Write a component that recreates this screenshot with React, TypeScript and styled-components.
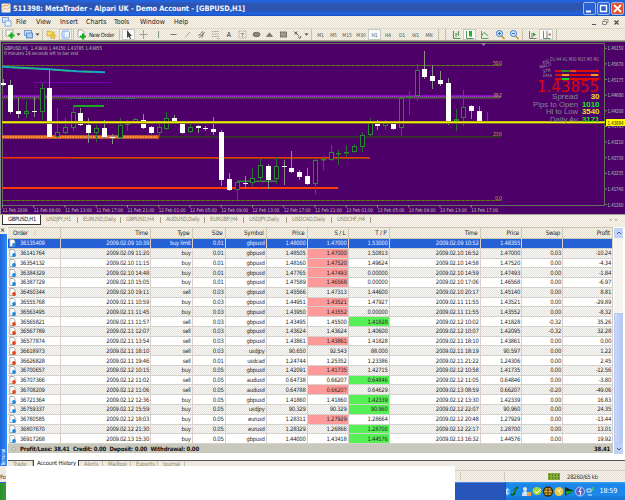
import React from "react";
import styled, { createGlobalStyle, css } from "styled-components";

const Global = createGlobalStyle`
  * { box-sizing: border-box; }
  body { margin: 0; overflow: hidden; font-family: "DejaVu Sans Condensed", "DejaVu Sans", sans-serif; font-stretch: condensed; }
`;

const dither = (a: string, b: string) => css`
  background: repeating-conic-gradient(${a} 0% 25%, ${b} 0% 50%) 0 0 / 2px 2px;
`;

const Window = styled.div`
  width: 625px;
  height: 500px;
  display: flex;
  flex-direction: column;
  overflow: hidden;
  background: #ece8dc;
`;

const TitleBar = styled.div`
  height: 16px;
  flex: none;
  display: flex;
  align-items: center;
  padding: 0 1px 0 1px;
  background: linear-gradient(#1b66e6 0, #2a5fd0 2px, #2c55b2 4px, #2c55b4 10px, #2162d8 13px, #1b5fe0 15px, #1c48a8 16px);
`;

const Title = styled.div`
  flex: 1;
  margin-left: 2px;
  color: #eef3ff;
  font: bold 7.4px/15px "DejaVu Sans Condensed", "DejaVu Sans", sans-serif;
  font-stretch: condensed;
  white-space: nowrap;
  letter-spacing: -0.08px;
`;

const WinButton = styled.div<{ $close?: boolean }>`
  width: 13px;
  height: 13px;
  margin-left: 1px;
  border: 1px solid #9db8ec;
  border-radius: 2px;
  background: ${(p) => (p.$close ? "#e4512a" : "#2b62d0")};
  svg { display: block; }
`;

const MenuBar = styled.div`
  height: 12px;
  flex: none;
  display: flex;
  align-items: center;
  padding-left: 2px;
  font-size: 7px;
  line-height: 11px;
  color: #222;
  ${dither("#f9f4ea", "#e9e1d4")}
`;

const MenuItem = styled.span<{ $w: number }>`
  width: ${(p) => p.$w}px;
  flex: none;
`;

const MdiButtons = styled.div`
  margin-left: auto;
  margin-right: 2px;
  display: flex;
`;

const ToolBar = styled.div`
  height: 13px;
  flex: none;
  display: flex;
  align-items: center;
  border-top: 1px solid #dcd6c4;
  border-bottom: 1px solid #a7a291;
  ${dither("#f6f2e6", "#e6dfd2")}
`;

const Slot = styled.div<{ $w: number; $on?: boolean }>`
  width: ${(p) => p.$w}px;
  height: 11px;
  flex: none;
  display: flex;
  align-items: center;
  justify-content: center;
  font-size: 5px;
  letter-spacing: -0.1px;
  color: #55554d;
  ${(p) => p.$on && css`background: #fbfaf6; border: 1px solid #c6ccca;`}
  svg { flex: none; display: block; }
`;

const Grip = styled.div<{ $w: number }>`
  width: ${(p) => p.$w}px;
  height: 11px;
  flex: none;
  display: flex;
  justify-content: center;
  &::after { content: ""; width: 1px; background: #c4c2ae; }
`;

const ToolLabel = styled.div`
  width: 28px;
  flex: none;
  font-size: 5.8px;
  letter-spacing: -0.3px;
  white-space: nowrap;
  color: #222;
  padding-left: 1px;
`;

const Chart = styled.svg`
  display: block;
  flex: none;
`;

const ChartTabs = styled.div`
  height: 13px;
  flex: none;
  display: flex;
  align-items: flex-start;
  border-top: 1px solid #a5a596;
  padding-left: 2px;
  font-size: 5.8px;
  line-height: 9px;
  ${dither("#f8f4ea", "#ece4da")}
`;

const ChartTab = styled.div<{ $w: number; $active?: boolean }>`
  width: ${(p) => p.$w}px;
  flex: none;
  height: ${(p) => (p.$active ? 10 : 9)}px;
  padding-left: 5px;
  white-space: nowrap;
  letter-spacing: -0.32px;
  color: ${(p) => (p.$active ? "#111" : "#8e8e6e")};
  ${(p) => p.$active
    ? css`background: #fff; border-right: 1px solid #333; border-bottom: 1px solid #333; border-left: 1px solid #333;`
    : css`background: linear-gradient(#a4a48c, #a4a48c) right 2px / 1px 6px no-repeat;`}
`;

const TabArrows = styled.div`
  margin-left: auto;
  width: 16px;
  color: #aaa894;
  display: flex;
  gap: 4px;
  font-size: 5px;
`;

const Terminal = styled.div`
  height: 239px;
  flex: none;
  display: flex;
`;

const SideBar = styled.div`
  width: 7px;
  flex: none;
  display: flex;
  flex-direction: column;
  justify-content: space-between;
  background: linear-gradient(90deg, #1d66dc, #2f8af6);
`;

const SideClose = styled.div`
  height: 7px;
  background: #f2ede2;
  font: bold 6px/6px "DejaVu Sans", sans-serif;
  color: #333;
`;

const SideLabel = styled.div`
  writing-mode: vertical-rl;
  transform: rotate(180deg);
  color: #fff;
  font-size: 5.3px;
  line-height: 7px;
  letter-spacing: -0.4px;
`;

const Main = styled.div`
  flex: 1;
  display: flex;
  flex-direction: column;
  padding-left: 1px;
  background: #fff;
`;

const TableArea = styled.div`
  height: 227px;
  flex: none;
  display: flex;
`;

const Table = styled.div`
  width: 605px;
  flex: none;
`;

const columns = "52.5px 90.5px 41.5px 33px 41px 41px 41px 41px 91px 41.5px 41px 50px";

const HeadRow = styled.div`
  display: grid;
  grid-template-columns: ${columns};
  height: 12px;
  border-bottom: 1px solid #cbc5b2;
  border-top: 1px solid #c9c5b5;
  ${dither("#f7f2e6", "#e6e0d2")}
`;

const HeadCell = styled.div<{ $left?: boolean }>`
  font-size: 6.2px;
  line-height: 10px;
  letter-spacing: -0.2px;
  text-align: ${(p) => (p.$left ? "left" : "right")};
  padding: 0 2px 0 5px;
  color: #222;
  border-right: 1px solid #cfc9b8;
`;

const SortMark = styled.span`
  margin-left: 6px;
  color: #a8a490;
`;

const Row = styled.div<{ $alt?: boolean; $selected?: boolean }>`
  display: grid;
  grid-template-columns: ${columns};
  height: 9.77px;
  border-bottom: 1px solid #d4d2cd;
  color: ${(p) => (p.$selected ? "#e4ecff" : "#2a2a2a")};
  ${(p) => p.$selected ? dither("#2a5fd0", "#1f62dc") : p.$alt ? dither("#fafaf8", "#e2e1dd") : css`background: #fff;`}
`;

const Cell = styled.div<{ $tone?: "red" | "green" }>`
  display: flex;
  align-items: center;
  justify-content: flex-end;
  white-space: nowrap;
  font-size: 5.95px;
  line-height: 8px;
  letter-spacing: -0.31px;
  padding-right: 1px;
  border-right: 1px solid #dccfc8;
  background: ${(p) => (p.$tone === "red" ? "#ff9a9a" : p.$tone === "green" ? "#55f055" : "transparent")};
`;

const OrderCell = styled(Cell)`
  justify-content: flex-start;
  padding-left: 1px;
  gap: 4px;
`;

const Summary = styled.div`
  height: 9.3px;
  display: flex;
  justify-content: space-between;
  align-items: center;
  background: #c9c8bc;
  color: #111;
  font-size: 5.95px;
  line-height: 9px;
  font-weight: bold;
  letter-spacing: -0.2px;
  padding: 0 3px 0 4px;
  white-space: pre;
`;

const SummaryText = styled.span`
  flex: 1;
  padding-left: 4px;
`;

const ScrollBar = styled.div`
  width: 9px;
  margin: 1px 0 0 1px;
  display: flex;
  flex-direction: column;
  background: #f5f4ee;
`;

const ScrollButton = styled.div`
  height: 10px;
  flex: none;
  display: flex;
  align-items: center;
  justify-content: center;
  background: #c0d2f8;
  border-radius: 1px;
`;

const Track = styled.div`
  flex: 1;
  padding-top: 75px;
`;

const Thumb = styled.div`
  height: 100%;
  background: linear-gradient(90deg, #c8d8fc, #b4c8f4);
  border: 1px solid #b8caf0;
`;

const BottomTabs = styled.div`
  flex: 1;
  display: flex;
  margin-top: 6px;
  border-top: 1px solid #555;
  font-size: 5.8px;
  line-height: 8px;
  ${dither("#f6f1e8", "#e9e1d8")}
`;

const BottomTab = styled.div<{ $w: number; $active?: boolean }>`
  width: ${(p) => p.$w}px;
  flex: none;
  white-space: nowrap;
  padding-left: 5px;
  letter-spacing: -0.15px;
  line-height: 7px;
  color: ${(p) => (p.$active ? "#111" : "#8c8c6c")};
  border-right: 1px solid ${(p) => (p.$active ? "#444" : "#c4c2ae")};
  ${(p) => p.$active && css`background: #fff; border-left: 1px solid #444; margin-top: -1px; padding-left: 3px;`}
`;

const Footer = styled.div`
  flex: 1;
  display: flex;
`;

const FooterLeft = styled.div`
  width: 6px;
  flex: none;
  display: flex;
  flex-direction: column;
`;

const StatusStub = styled.div`
  height: 16px;
  overflow: hidden;
  background: #f0ebe0;
  color: #333;
  font-size: 6px;
  padding-top: 7px;
  line-height: 8px;
  letter-spacing: -0.5px;
`;

const StartStub = styled.div`
  flex: 1;
  border-top: 1px solid #2d62d4;
  background: linear-gradient(90deg, #2b8f2b, #3a9a3a);
`;

const Blank = styled.div`
  width: 449px;
  flex: none;
  background: #fff;
`;

const FooterRight = styled.div`
  flex: 1;
  display: flex;
  flex-direction: column;
`;

const FooterGap = styled.div`
  height: 5px;
  border-bottom: 1px solid #d0cdbf;
  ${dither("#f6f1e8", "#e9e1d8")}
`;

const StatusBar = styled.div`
  height: 11px;
  display: flex;
  align-items: center;
  font-size: 6px;
  letter-spacing: -0.3px;
  color: #333;
  ${dither("#f6f1e8", "#e9e1d8")}
`;

const StatusField = styled.div<{ $w: number }>`
  width: ${(p) => p.$w}px;
  height: 9px;
  border-right: 1px solid #cfccba;
`;

const Traffic = styled.svg`
  margin: 0 7px 0 43px;
`;

const TaskBar = styled.div`
  flex: 1;
  display: flex;
`;

const TaskArea = styled.div`
  width: 50px;
  border-top: 1px solid #4c86e8;
  ${dither("#2a52b0", "#2458c2")}
`;

const Tray = styled.div`
  flex: 1;
  display: flex;
  align-items: center;
  border-left: 1px solid #1a50b0;
  background: linear-gradient(#3aa4f4 0, #1c86ea 2px, #1a88e8 13px, #1672d0);
  color: #fff;
  font: 7px/17px "DejaVu Sans Condensed", "DejaVu Sans", sans-serif;
  font-stretch: condensed;
`;

const Clock = styled.span`
  margin-left: 5.5px;
  letter-spacing: -0.1px;
`;

type Candle = [number, number, number, number, number, 0 | 1];

/* x, high, body top, body bottom, low, rising */
const candles: Candle[] = [
  [3, 79, 83, 85, 86, 0], [10.5, 80, 85, 112, 114, 0], [18.5, 98, 111, 114, 118, 0], [26.5, 101, 111, 114, 118, 1],
  [34, 97, 111, 112, 117, 0], [42, 83, 88, 112, 120, 1], [49.5, 69, 88, 137, 138, 0], [57.5, 108, 132, 137, 138, 1],
  [65, 118, 127, 133, 134, 1], [73, 105, 112, 128, 131, 1], [80.5, 108, 113, 125, 126, 0], [88.5, 118, 125, 133, 143, 0],
  [96.5, 125, 128, 133, 142, 1], [104.5, 120, 128, 137, 138, 0], [112, 134, 137, 138, 144, 0], [120, 118, 125, 138, 139, 1],
  [127.5, 120, 123, 125, 131, 1], [135, 118, 119, 123, 124, 1], [143.5, 114, 120, 128, 129, 0], [151, 126, 127, 133, 134, 0],
  [159, 122, 127, 133, 137, 1], [166.5, 112, 118, 129, 130, 1], [174.5, 115, 118, 123, 124, 0], [182.5, 121, 122, 133, 134, 0],
  [190, 123, 127, 132, 133, 1], [198, 125, 126, 128, 133, 0], [205.5, 126, 128, 129, 131, 0], [213.5, 117, 129, 132, 135, 0],
  [221.5, 130, 132, 180, 186, 0], [229.5, 173, 179, 190, 191, 0], [237, 181, 182, 190, 200, 1], [245, 176, 183, 184, 189, 0],
  [252.5, 168, 178, 183, 186, 1], [260.5, 159, 165, 178, 182, 1], [268.5, 164, 166, 180, 189, 0], [276, 157, 166, 179, 184, 1],
  [284, 160, 166, 167, 185, 0], [291.5, 151, 168, 172, 173, 0], [299.5, 170, 172, 177, 180, 0], [307.5, 168, 176, 184, 185, 0],
  [315, 158, 160, 184, 194, 1], [323, 157, 159, 160, 170, 1], [331, 145, 152, 160, 161, 1], [338.5, 150, 153, 154, 165, 1],
  [346.5, 145, 152, 153, 157, 1], [354, 144, 146, 152, 153, 1], [362, 132, 135, 147, 152, 1], [370, 118, 121, 135, 136, 1],
  [377.5, 120, 122, 126, 130, 0], [385.5, 120, 123, 126, 130, 1], [393.5, 121, 123, 129, 130, 0], [401, 96, 98, 128, 136, 1],
  [409, 91, 96, 98, 115, 1], [417, 64, 70, 96, 101, 1], [424.5, 51, 69, 77, 79, 0], [432.5, 65, 76, 81, 89, 0],
  [440.5, 71, 80, 84, 86, 0], [448, 78, 83, 122, 125, 0], [456, 109, 119, 121, 131, 1], [463.5, 90, 107, 118, 126, 1],
  [471.5, 105, 106, 111, 119, 0], [479.5, 106, 111, 122, 124, 0], [487, 112, 121, 123, 124, 1],
];

const priceScale = ["1.46150", "1.45670", "1.45175", "1.44680", "1.44200", "1.43705", "1.43210", "1.42730", "1.42235", "1.41740", "1.41260"];
const timeScale = [
  "11 Feb 2009", "11 Feb 09:00", "11 Feb 13:00", "11 Feb 17:00", "11 Feb 21:00", "12 Feb 01:00", "12 Feb 05:00", "12 Feb 09:00",
  "12 Feb 13:00", "12 Feb 17:00", "12 Feb 21:00", "13 Feb 01:00", "13 Feb 05:00", "13 Feb 09:00", "13 Feb 13:00", "13 Feb 17:00",
];
const stats: [string, string, string, number, number][] = [
  ["Spread", "30", "#f0e020", 552, 26], ["Pips to Open", "1010", "#10e820", 533, 45],
  ["Hi to Low", "3540", "#e0e020", 546, 32], ["Daily Av", "3171", "#10e820", 550, 28],
];

function PriceChart() {
  const scale = "#bcc6ae";
  return (
    <Chart width="625" height="173" viewBox="0 41 625 173" fontFamily="'DejaVu Sans Condensed', 'DejaVu Sans', sans-serif">
      <rect x="0" y="41" width="625" height="173" fill="#4c0068" />
      <rect x="0" y="41" width="625" height="1" fill="#6f7565" />
      <rect x="0" y="41" width="1" height="173" fill="#8f8a9a" />
      <path d="M2.5 43.5H604.5V205.5H2.5Z" fill="none" stroke="#66705f" />
      <g fill="#566018">
        <rect x="2" y="65" width="500" height="1" /><rect x="2" y="200" width="500" height="1" />
      </g>
      <path d="M2 65.5H501M2 200.5H501" stroke="#6c7a20" strokeDasharray="2 3" />
      <rect x="2" y="95" width="499" height="2" fill="#8a08c8" />
      <path d="M2 96.5H497" stroke="#a53cd6" strokeDasharray="1 1" />
      <rect x="2" y="97" width="499" height="1.5" fill="#5a5a48" />
      <path d="M2 99.5H70" stroke="#3c3c34" strokeDasharray="2 1" />
      <path d="M70 98.5H135" stroke="#287a78" strokeDasharray="2 1" />
      <rect x="34" y="82" width="77" height="1" fill="#7800b4" />
      <path d="M2 66.7L49 69.2L77 71.2L105 72.2" stroke="#18a8c0" strokeWidth="2" fill="none" />
      <path d="M10 67.5L40 68.7M53 70L70 71M82 71.7L92 72" stroke="#20c070" strokeWidth="1" fill="none" />
      <rect x="73" y="105" width="31" height="2" fill="#18a820" />
      <rect x="158" y="136" width="343" height="2" fill="#38302c" />
      <rect x="2" y="135" width="157" height="4" fill="#b85434" />
      <path d="M2 137H158" stroke="#ff8c30" strokeWidth="2" strokeDasharray="2 .6" />
      <rect x="2" y="157" width="368" height="1.6" fill="#f03408" />
      <path d="M70 158.5H370" stroke="#985018" strokeDasharray="1 1" />
      <rect x="2" y="187" width="336" height="2" fill="#ff3c08" />
      <rect x="237" y="180.6" width="39" height="1.2" fill="#28a828" />
      {candles.map(([x, high, top, bottom, low, rising]) => {
        const cx = Math.floor(x);
        return rising ? (
          <g key={x}>
            <path d={`M${cx + 0.5} ${high}V${top}M${cx + 0.5} ${bottom}V${low}`} stroke="#2c6c34" />
            <rect x={cx - 1.5} y={top + 0.5} width="4" height={Math.max(bottom - top - 1, 0.5)} fill="#420058" stroke="#258a30" />
          </g>
        ) : (
          <g key={x}>
            <path d={`M${cx + 0.5} ${high}V${low}`} stroke="#8a9088" />
            <rect x={cx - 2} y={top} width="5" height={bottom - top} fill="#fff" />
          </g>
        );
      })}
      <rect x="2" y="121" width="603" height="3" fill="#70602c" />
      <rect x="2" y="121.4" width="603" height="1.5" fill="#ffff00" />
      <path d="M481 43L486 43L483.500 46Z" fill="#8b9488" />
      <text x="4" y="49.500" fontSize="5.2" fill={scale} textLength="98" lengthAdjust="spacingAndGlyphs">GBPUSD,H1&#160;&#160;1.43930 1.44150 1.43785 1.43855</text>
      <text x="4" y="54.500" fontSize="5" fill={scale} textLength="74" lengthAdjust="spacingAndGlyphs">0 minutes 19 seconds left to bar end</text>
      <g fontSize="5.4" fill="#a8a840">
        <text x="493" y="65" textLength="9">50.0</text><text x="493" y="97" textLength="9">38.2</text>
        <text x="493" y="136" textLength="9">23.6</text><text x="495" y="199.500" textLength="7">0.0</text>
      </g>
      {priceScale.map((p, i) => (
        <g key={p}>
          <path d={`M605 ${48.3 + i * 15.63}h2`} stroke="#7c8472" />
          <text x="607.500" y={50.3 + i * 15.63} fontSize="5.4" fill={scale} textLength="16" lengthAdjust="spacingAndGlyphs">{p}</text>
        </g>
      ))}
      <rect x="606" y="119" width="19" height="7" fill="#ffff00" />
      <text x="607.500" y="124.500" fontSize="5.4" fill="#222" textLength="16" lengthAdjust="spacingAndGlyphs">1.43884</text>
      {timeScale.map((t, i) => (
        <g key={t}>
          <path d={`M${2.5 + i * 31.25} 205v2.500`} stroke="#8c947f" />
          <text x={2.5 + i * 31.25} y="212" fontSize="5.2" fill={scale} textLength={i ? 27 : 25} lengthAdjust="spacingAndGlyphs">{t}</text>
        </g>
      ))}
      <text x="550" y="60.500" fontSize="5.2" fill="#9a9aa0" textLength="49" lengthAdjust="spacingAndGlyphs">D1 H4 H1 M30 M15 M5 M1</text>
      <g fontSize="4.6" fill="#9b98b0">
        <text x="543" y="64.500" transform="rotate(-18 543 64.500)">RSI</text>
        <text x="540" y="69" transform="rotate(-18 540 69)">MACD</text>
        <text x="543" y="73" transform="rotate(-10 543 73)">STR</text>
        <text x="543" y="77">EMA</text>
      </g>
      <g fill="#d80c0c">
        <rect x="555" y="70" width="44" height="2" /><rect x="555" y="74" width="44" height="2" /><rect x="555" y="78" width="44" height="2" />
      </g>
      <rect x="562" y="70" width="7" height="2" fill="#2c8c30" /><rect x="570" y="70" width="6" height="2" fill="#e84c20" />
      <rect x="562" y="74" width="7" height="2" fill="#f0a020" /><rect x="591" y="74" width="7" height="2" fill="#f0a020" />
      <rect x="562" y="78" width="7" height="2" fill="#18d820" />
      <text x="537" y="92" fontSize="15.500" fill="#d8080c" fontFamily="'DejaVu Sans', sans-serif" textLength="62" lengthAdjust="spacingAndGlyphs">1.43855</text>
      {stats.map(([label, value, color, x, w], i) => (
        <g key={label} fontSize="7.500" fontFamily="'Liberation Sans', sans-serif">
          <text x={x} y={99.4 + i * 7.4} fill="#8a8590" textLength={w} lengthAdjust="spacingAndGlyphs">{label}</text>
          <text x="599.500" y={99.4 + i * 7.4} fill={color} fontWeight="bold" textAnchor="end" textLength={value.length * 4.4} lengthAdjust="spacingAndGlyphs">{value}</text>
        </g>
      ))}
    </Chart>
  );
}

const glyphs: Record<string, React.ReactNode> = {
  newChart: <><rect x="1" y="1" width="7" height="6" fill="#f5f8f5" stroke="#8a9a8a" strokeWidth=".7" /><path d="M6.500 3.500v6M3.500 6.500h6" stroke="#12b01c" strokeWidth="2.200" /></>,
  caret: <path d="M3.500 4.500h4l-2 2z" fill="#333" />,
  profiles: <><rect x="1.500" y="1.500" width="7" height="5" fill="#cfe2fa" stroke="#5a8ad0" strokeWidth=".8" /><rect x="3.500" y="4" width="6" height="5" fill="#a9cbf5" stroke="#4a7cc8" strokeWidth=".8" /></>,
  navigator: <><path d="M1 2h3l1 1h3v4H1z" fill="#f7dc60" stroke="#b89828" strokeWidth=".6" /><path d="M7 4l1 2 2 .3-1.500 1.500.4 2.200-2-1-2 1 .4-2.200L4 6.300l2-.3z" fill="#f0c828" stroke="#b89828" strokeWidth=".4" /></>,
  terminal: <><rect x="2" y="2" width="7.500" height="7" rx="1" fill="#eaf3ff" stroke="#5a94e0" strokeWidth=".8" /><path d="M4 2.500v6" stroke="#8ab4ea" strokeWidth=".8" /></>,
  newOrder: <><path d="M2 1h4l2 2v5H2z" fill="#fff" stroke="#888" strokeWidth=".7" /><path d="M7 4.500v6M4 7.500h6" stroke="#12b01c" strokeWidth="2.200" /></>,
  cursor: <path d="M4 1v8l1.800-1.600L7 10l1-.5L7 7h2z" fill="#444" />,
  cross: <path d="M5.500 1v9M1.500 5.500h8" stroke="#999" strokeWidth=".9" />,
  vline: <path d="M5.500 2v7" stroke="#7f9a7f" />,
  hline: <path d="M2.500 5.500h6" stroke="#777" />,
  trend: <path d="M3 8.500l5-5.500" stroke="#888" strokeWidth=".8" />,
  channel: <path d="M2 7l5-5M3 9l6-6M3 6h5M6 9l1-6" stroke="#777" strokeWidth=".8" />,
  fibo: <path d="M2 2.500h7M2 5h7M2 7.500h7M7 9.500h3" stroke="#8f8772" strokeWidth=".8" strokeDasharray="1 .6" />,
  text: <text x="3.500" y="8" fontSize="6.500" fontFamily="Liberation Sans, sans-serif" fontWeight="bold" fill="#666">A</text>,
  label: <><rect x="2" y="2" width="7" height="7" fill="none" stroke="#888" strokeWidth=".7" strokeDasharray="1 .7" /><text x="3.700" y="8" fontSize="5.500" fontFamily="Liberation Sans, sans-serif" fill="#555">T</text></>,
  ellipse: <ellipse cx="5.500" cy="5.500" rx="3.500" ry="2.200" fill="#858578" stroke="#66665c" strokeWidth=".8" />,
  triangle: <path d="M2.500 7.500L5.500 3.800l3 3.700z" fill="#77776c" stroke="#66665c" strokeWidth=".6" />,
  rect: <rect x="2.500" y="3" width="6" height="5" fill="#9a9a8e" stroke="#66665c" strokeWidth=".8" />,
  arrows: <path d="M2 2.500l3 3M5 2.500l-2 3M6 8l2 1.500L9 7M3 3l4 4" stroke="#555" strokeWidth=".9" fill="none" />,
  bars: <path d="M2.500 2v7.500h7M5 4v4M5 5h1.500M7.500 2v5" stroke="#3f8a48" strokeWidth=".9" fill="none" />,
  candle: <><path d="M2.500 2v7.500h7" stroke="#3f8a48" strokeWidth=".9" fill="none" /><rect x="5" y="2" width="3" height="5.500" fill="#1fb32c" /></>,
  line: <path d="M2.500 2v7.500h7M3 6.500q2-5 3.500-1.500L9 6.500" stroke="#4a9a50" strokeWidth=".9" fill="none" />,
  zoomIn: <><path d="M6.500 7l3 3" stroke="#c99c28" strokeWidth="1.600" /><circle cx="4.500" cy="4.500" r="3" fill="#cfe6ff" stroke="#3a7ad0" /><path d="M3 4.500h3M4.500 3v3" stroke="#2460c0" strokeWidth=".9" /></>,
  zoomOut: <><path d="M6.500 7l3 3" stroke="#c99c28" strokeWidth="1.600" /><circle cx="4.500" cy="4.500" r="3" fill="#cfe6ff" stroke="#3a7ad0" /><path d="M3 4.500h3" stroke="#2460c0" strokeWidth=".9" /></>,
  scroll: <><path d="M2.500 2v7.500h7M5 4v5" stroke="#667566" strokeWidth=".9" fill="none" /><path d="M6 3.500l3 2-3 2z" fill="#1fb32c" /></>,
  shift: <><path d="M2.500 2v7.500h7M6 2v7" stroke="#667566" strokeWidth=".9" fill="none" /><path d="M9.500 4l-2.500 1.500 2.500 1.500z" fill="#c05030" /></>,
};

type Tool = { w: number; icon?: string; text?: string; label?: string; on?: boolean };
const tools: Tool[] = [
  { w: 4 }, { w: 12, icon: "newChart" }, { w: 5, icon: "caret" }, { w: 14, icon: "profiles" }, { w: 5, icon: "caret" }, { w: 4 },
  { w: 15, icon: "navigator" }, { w: 13, icon: "terminal", on: true }, { w: 3 }, { w: 13, icon: "newOrder" }, { w: 28, label: "New Order" },
  { w: 6 }, { w: 13, icon: "cursor", on: true }, { w: 16, icon: "cross" }, { w: 15, icon: "vline" }, { w: 15, icon: "hline" },
  { w: 13, icon: "trend" }, { w: 14, icon: "channel" }, { w: 14, icon: "fibo" }, { w: 13, icon: "text" }, { w: 14, icon: "label" },
  { w: 14, icon: "ellipse" }, { w: 13, icon: "triangle" }, { w: 14, icon: "rect" }, { w: 14, icon: "arrows" }, { w: 5, icon: "caret" },
  { w: 5 }, { w: 13, text: "M1" }, { w: 13, text: "M5" }, { w: 14, text: "M15" }, { w: 14, text: "M30" }, { w: 13, text: "H1", on: true },
  { w: 14, text: "H4" }, { w: 14, text: "D1" }, { w: 13, text: "W1" }, { w: 14, text: "MN" }, { w: 5 }, { w: 9 },
  { w: 13, icon: "bars" }, { w: 13, icon: "candle", on: true }, { w: 16, icon: "line" }, { w: 17, icon: "zoomIn" }, { w: 11, icon: "zoomOut" },
  { w: 5 }, { w: 14, icon: "scroll" }, { w: 14, icon: "shift", on: true }, { w: 6 },
];

const menu: [string, number][] = [["File", 20], ["View", 24], ["Insert", 26], ["Charts", 28], ["Tools", 26], ["Window", 34], ["Help", 20]];

const chartTabs: [string, number][] = [
  ["GBPUSD,H1", 39], ["USDJPY,H1", 37], ["EURUSD,Daily", 43], ["GBPUSD,H4", 40], ["AUDUSD,Daily", 44], ["EURGBP,H4", 39],
  ["USDJPY,Daily", 43], ["USDCAD,Daily", 45], ["USDCHF,H4", 39],
];

const headings = ["Order", "Time", "Type", "Size", "Symbol", "Price", "S / L", "T / P", "Time", "Price", "Swap", "Profit"];

/* A leading "!" marks a stop that was hit, a leading "+" a target that was hit. */
const orders = `36135409|2009.02.09 10:39|buy limit|0.01|gbpusd|1.48000|1.47000|1.53000|2009.02.09 10:52|1.48355||
36141764|2009.02.09 11:20|buy|0.01|gbpusd|1.48505|!1.47000|1.50813|2009.02.10 16:52|1.47000|0.03|-10.24
36354132|2009.02.10 11:15|buy|0.01|gbpusd|1.48160|!1.47520|1.49624|2009.02.10 14:58|1.47520|0.00|-4.34
36384329|2009.02.10 14:48|buy|0.01|gbpusd|1.47765|!1.47493|0.00000|2009.02.10 14:59|1.47493|0.00|-1.84
36387729|2009.02.10 15:05|buy|0.01|gbpusd|1.47589|!1.46568|0.00000|2009.02.10 17:06|1.46568|0.00|-6.97
36450344|2009.02.10 19:11|sell|0.03|gbpusd|1.45566|1.47313|1.44600|2009.02.10 20:17|1.45140|0.00|8.81
36555768|2009.02.11 10:59|buy|0.03|gbpusd|1.44951|!1.43521|1.47927|2009.02.11 11:55|1.43521|0.00|-29.89
36563495|2009.02.11 11:45|buy|0.03|gbpusd|1.43950|!1.43552|0.00000|2009.02.11 11:55|1.43552|0.00|-8.32
36565821|2009.02.11 11:57|sell|0.03|gbpusd|1.43495|1.45500|+1.41828|2009.02.12 10:02|1.41828|-0.32|35.26
36567789|2009.02.11 12:07|sell|0.03|gbpusd|1.43624|1.43624|1.40600|2009.02.12 10:07|1.42095|-0.32|32.28
36577874|2009.02.11 13:54|sell|0.03|gbpusd|1.43861|!1.43861|1.41828|2009.02.11 18:10|1.43861|0.00|0.00
36618973|2009.02.11 18:10|sell|0.03|usdjpy|90.650|92.543|88.000|2009.02.11 18:19|90.597|0.00|1.22
36626828|2009.02.11 19:46|sell|0.01|usdcad|1.24744|1.25352|1.23386|2009.02.11 21:22|1.24306|0.00|2.45
36700657|2009.02.12 10:15|buy|0.05|gbpusd|1.42091|!1.41735|1.42715|2009.02.12 10:58|1.41735|0.00|-12.56
36707366|2009.02.12 11:02|sell|0.05|audusd|0.64738|0.66207|+0.64846|2009.02.12 11:05|0.64846|0.00|-3.80
36708209|2009.02.12 11:06|sell|0.05|audusd|0.64788|!0.66207|0.64629|2009.02.13 08:59|0.66207|-0.20|-49.06
36721364|2009.02.12 12:36|buy|0.05|gbpusd|1.41860|1.41860|+1.42339|2009.02.12 13:30|1.42339|0.00|16.83
36759337|2009.02.12 15:59|buy|0.05|usdjpy|90.329|90.329|+90.960|2009.02.12 22:07|90.960|0.00|24.35
36780585|2009.02.12 18:03|buy|0.05|eurusd|1.28311|!1.27929|1.28664|2009.02.12 20:48|1.27929|0.00|-13.44
36807670|2009.02.12 21:30|buy|0.05|eurusd|1.28329|1.26866|+1.28700|2009.02.12 22:17|1.28700|0.00|13.01
36917268|2009.02.13 15:30|buy|0.05|gbpusd|1.44000|1.43418|+1.44576|2009.02.13 16:32|1.44576|0.00|19.92`
  .split("\n")
  .map((line) => line.split("|"));

const toneOf = (value: string) => (value[0] === "!" ? "red" : value[0] === "+" ? "green" : undefined);

function OrderIcon({ sell }: { sell: boolean }) {
  return (
    <svg width="7" height="8" viewBox="0 0 7 8">
      <path d="M.8.5h3.700l1.500 1.500v5.500H.8z" fill="#fff" stroke="#8c8c8c" strokeWidth=".7" />
      <circle cx="5" cy="6" r="1.900" fill={sell ? "#e04818" : "#2088e0"} />
    </svg>
  );
}

export default function App() {
  return (
    <Window>
      <Global />
      <TitleBar>
        <svg width="10" height="10" viewBox="0 0 10 10">
          <rect x=".5" y=".5" width="9" height="9" rx="1" fill="#f5efe0" />
          <path d="M1 4l3-2 2 1 3-2" stroke="#e0a030" fill="none" /><path d="M1 8l3-3 2 1.500L9 4" stroke="#c8b8a0" fill="none" />
        </svg>
        <Title>511398: MetaTrader - Alpari UK - Demo Account - [GBPUSD,H1]</Title>
        <WinButton><svg width="11" height="11"><path d="M2 8.500h5" stroke="#fff" strokeWidth="2" /></svg></WinButton>
        <WinButton><svg width="11" height="11"><path d="M2 2.500h7M2.500 2v6.500h6V2" stroke="#fff" strokeWidth="1.400" fill="none" /></svg></WinButton>
        <WinButton $close><svg width="11" height="11"><path d="M2 2l7 7M9 2l-7 7" stroke="#fff" strokeWidth="1.800" /></svg></WinButton>
      </TitleBar>
      <MenuBar>
        <MenuItem $w={14}>
          <svg width="10" height="10" viewBox="0 0 10 10" display="block">
            <rect x=".5" y=".5" width="6" height="5" fill="#d6e8fc" stroke="#6a9ad8" strokeWidth=".8" />
            <rect x="3" y="4" width="6" height="5" fill="#eef6ff" stroke="#6a9ad8" strokeWidth=".8" />
          </svg>
        </MenuItem>
        {menu.map(([name, w]) => <MenuItem key={name} $w={w}>{name}</MenuItem>)}
        <MdiButtons>
          <svg width="34" height="10">
            <path d="M3 7.500h4" stroke="#555" /><path d="M13.500 4.500h4v3h-4zM15 4V2.500h4v3h-1" fill="none" stroke="#777" strokeWidth=".8" />
            <path d="M25.500 3.500l4 4M29.500 3.500l-4 4" stroke="#444" strokeWidth="1.100" />
          </svg>
        </MdiButtons>
      </MenuBar>
      <ToolBar>
        {tools.map((t, i) =>
          t.label ? <ToolLabel key={i}>{t.label}</ToolLabel>
            : t.icon ? <Slot key={i} $w={t.w} $on={t.on}><svg width="11" height="11" viewBox="0 0 11 11">{glyphs[t.icon]}</svg></Slot>
            : t.text ? <Slot key={i} $w={t.w} $on={t.on}>{t.text}</Slot>
            : <Grip key={i} $w={t.w} />
        )}
      </ToolBar>
      <PriceChart />
      <ChartTabs>
        {chartTabs.map(([name, w], i) => <ChartTab key={name} $w={w} $active={i === 0}>{name}</ChartTab>)}
        <TabArrows><span>◂</span><span>▸</span></TabArrows>
      </ChartTabs>
      <Terminal>
        <SideBar>
          <SideClose>×</SideClose>
          <SideLabel>Terminal</SideLabel>
        </SideBar>
        <Main>
          <TableArea>
            <Table>
              <HeadRow>
                {headings.map((h, i) => <HeadCell key={i} $left={i === 0}>{h}{i === 0 && <SortMark>/</SortMark>}</HeadCell>)}
              </HeadRow>
              {orders.map((o, r) => (
                <Row key={o[0]} $alt={r % 2 === 1} $selected={r === 0}>
                  {o.map((value, c) => c === 0
                    ? <OrderCell key={c}><OrderIcon sell={o[2] === "sell"} />{value}</OrderCell>
                    : <Cell key={c} $tone={toneOf(value)}>{value.replace(/^[!+]/, "")}</Cell>)}
                </Row>
              ))}
              <Summary>
                <svg width="4" height="4"><circle cx="2" cy="2" r="1.500" fill="#eee" stroke="#888" strokeWidth=".6" /></svg>
                <SummaryText>Profit/Loss: 38.41  Credit: 0.00  Deposit: 0.00  Withdrawal: 0.00</SummaryText>
                <span>38.41</span>
              </Summary>
            </Table>
            <ScrollBar>
              <ScrollButton><svg width="6" height="4"><path d="M1 3l2-2 2 2" stroke="#4a5f90" fill="none" /></svg></ScrollButton>
              <Track><Thumb /></Track>
              <ScrollButton><svg width="6" height="4"><path d="M1 1l2 2 2-2" stroke="#4a5f90" fill="none" /></svg></ScrollButton>
            </ScrollBar>
          </TableArea>
          <BottomTabs>
            <BottomTab $w={25}>Trade</BottomTab>
            <BottomTab $w={46} $active>Account History</BottomTab>
            <BottomTab $w={24}>Alerts</BottomTab>
            <BottomTab $w={28}>Mailbox</BottomTab>
            <BottomTab $w={27}>Experts</BottomTab>
            <BottomTab $w={27}>Journal</BottomTab>
          </BottomTabs>
        </Main>
      </Terminal>
      <Footer>
        <FooterLeft>
          <StatusStub>Fo</StatusStub>
          <StartStub />
        </FooterLeft>
        <Blank />
        <FooterRight>
          <FooterGap />
          <StatusBar>
            <StatusField $w={6} />
            <StatusField $w={44} />
            <Traffic width="12" height="7">
              <rect width="12" height="7" fill="#88a838" />
              <path d="M1.500 1v5M4.500 1v5M7.500 1v5M10.500 1v5" stroke="#4c7c30" strokeDasharray="2 1" />
            </Traffic>
            28260/65 kb
          </StatusBar>
          <TaskBar>
            <TaskArea />
            <Tray>
              <svg width="88" height="17" viewBox="505 483 88 17">
                <circle cx="505" cy="491.500" r="4" fill="#4ab0f8" />
                <path d="M507 489l-2.500 2.500 2.500 2.500" stroke="#e8f4ff" strokeWidth="1.300" fill="none" />
                <path d="M510 495l3-1 1-4 3-3" stroke="#0c5a18" strokeWidth="2.200" fill="none" />
                <path d="M511 494l5-6" stroke="#38b840" strokeWidth=".8" />
                <circle cx="524" cy="489" r="2" fill="#e8e8e8" /><path d="M521 496q0-5 3-5t3 5z" fill="#d0e4f4" /><rect x="526" y="492" width="4" height="4" fill="#e8a050" />
                <ellipse cx="536" cy="491" rx="4.500" ry="4" fill="#a4d838" /><path d="M534 491l2 2 4-4" stroke="#fff" fill="none" />
                <circle cx="547" cy="491.500" r="4.500" fill="#e8b028" stroke="#30280c" strokeWidth="1.300" /><path d="M543 490h8M543 493h8M547 487v9" stroke="#30280c" strokeWidth=".8" />
                <circle cx="558" cy="491.500" r="4.500" fill="#e8c83c" /><path d="M556 489l4 5M560 489l-3 3" stroke="#fff8d0" />
                <path d="M564 487l9 4-9 5z" fill="#0c2c10" /><path d="M565 491l8 0-8 4z" fill="#18a030" />
                <circle cx="579" cy="491.500" r="4.500" fill="#5a62c8" stroke="#b8c4f0" /><path d="M580 488l-2 3.500h2l-1 4" stroke="#fff" fill="none" />
                <path d="M586 489h4v3h-4zM587 495h4" stroke="#d8e8f8" fill="none" /><path d="M591 487h3v4h-3z" fill="#38c060" />
              </svg>
              <Clock>18:59</Clock>
            </Tray>
          </TaskBar>
        </FooterRight>
      </Footer>
    </Window>
  );
}
